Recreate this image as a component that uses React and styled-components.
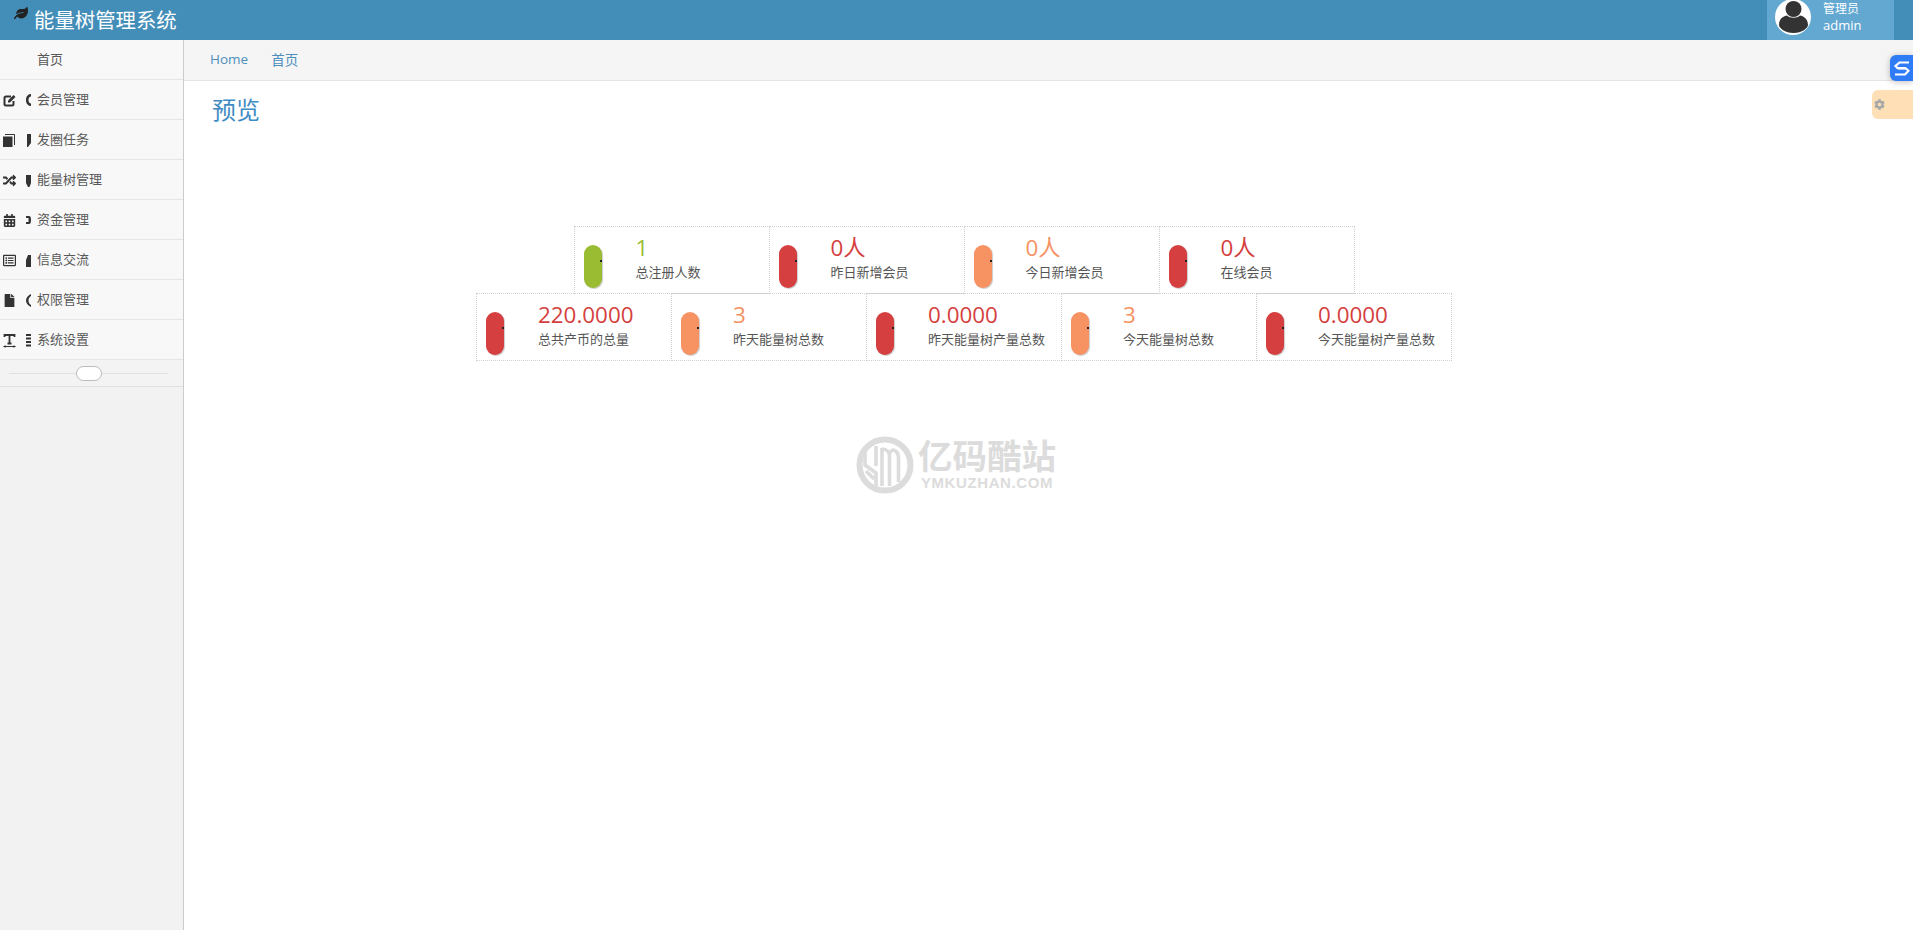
import React from 'react';
import styled, { createGlobalStyle } from 'styled-components';
import { FaLeaf, FaRandom, FaCalendarAlt, FaFile, FaCog, FaRegListAlt } from 'react-icons/fa';

const GlobalStyle = createGlobalStyle`
  html, body {
    margin: 0;
    padding: 0;
    height: 100%;
    overflow: hidden;
    background: #fff;
    font-family: "Open Sans", "Noto Sans CJK SC", sans-serif;
    font-size: 13px;
    color: #393939;
  }
`;

const tones = {
  green: '#9abc32',
  red: '#d53f40',
  orange: '#f79263',
};

// the template's own edit, book and text glyphs are heavier than the icon pack ones
const EditGlyph = () => (
  <svg width="13" height="13" viewBox="0 0 13 13">
    <path d="M8 2.500H3A1.500 1.500 0 0 0 1.500 4v6A1.500 1.500 0 0 0 3 11.500h6A1.500 1.500 0 0 0 10.500 10V7" fill="none" stroke="#333" strokeWidth="2" />
    <path d="M5 6.500L10.500 1 12.500 3 7 8.500H5z" fill="#333" />
  </svg>
);

const BookGlyph = () => (
  <svg width="12" height="13" viewBox="0 0 12 13">
    <path d="M0 2.500h9.500V13H0z" fill="#333" />
    <path d="M2 .5h9.500V11" fill="none" stroke="#333" strokeWidth="1" />
  </svg>
);

const TextGlyph = () => (
  <svg width="13" height="14" viewBox="0 0 13 14">
    <path d="M1.500 3V1h10v2M6.500 1v8M4.500 9.500h4" fill="none" stroke="#333" strokeWidth="1.800" />
    <path d="M.5 12.500h12" fill="none" stroke="#333" strokeWidth="1" />
    <path d="M.5 12.500l2-1.500v3zM12.500 12.500l-2-1.500v3z" fill="#333" />
  </svg>
);

const menuData = [
  { label: '首页' },
  { label: '会员管理', icon: <EditGlyph />, stub: 'M5 0C2 0 0 2.500 0 6s2 6 5 6V9.500C3.500 9.500 2.500 8 2.500 6S3.500 2.500 5 2.500z' },
  { label: '发圈任务', icon: <BookGlyph />, stub: 'M1 0h4v9L2 13H1z' },
  { label: '能量树管理', icon: <FaRandom />, stub: 'M0 1h5v8l-1.500 4H2L0 9z' },
  { label: '资金管理', icon: <FaCalendarAlt />, stub: 'M0 2h3c1.500 0 2 1.500 2 4s-.5 4-2 4H0V8h2.500V4H0z' },
  { label: '信息交流', icon: <FaRegListAlt />, stub: 'M2 1h3v3H5v9H0V6z' },
  { label: '权限管理', icon: <FaFile />, stub: 'M5 0C2 1.500 0 3.500 0 6.500s2 5 5 6.500v-2C3.500 10 2.500 8.500 2.500 6.500S3.500 3 5 2z' },
  { label: '系统设置', icon: <TextGlyph />, stub: 'M0 0h5v2H0zM0 3.500h5v2H0zM0 7h5v2H0zM0 10.500h5v2H0z' },
];

const topStats = [
  { value: '1', label: '总注册人数', tone: 'green' },
  { value: '0人', label: '昨日新增会员', tone: 'red' },
  { value: '0人', label: '今日新增会员', tone: 'orange' },
  { value: '0人', label: '在线会员', tone: 'red' },
];

const bottomStats = [
  { value: '220.0000', label: '总共产币的总量', tone: 'red' },
  { value: '3', label: '昨天能量树总数', tone: 'orange' },
  { value: '0.0000', label: '昨天能量树产量总数', tone: 'red' },
  { value: '3', label: '今天能量树总数', tone: 'orange' },
  { value: '0.0000', label: '今天能量树产量总数', tone: 'red' },
];

const StatCard = ({ value, label, tone }) => (
  <Card>
    <Pill $tone={tone} />
    <CardText>
      <CardValue $tone={tone}>{value}</CardValue>
      <CardLabel>{label}</CardLabel>
    </CardText>
  </Card>
);

const MenuRow = ({ label, icon, stub }) => (
  <MenuItem>
    <MenuIcon>{icon}</MenuIcon>
    <MenuStub>
      {stub && (
        <svg width="5" height="13" viewBox="0 0 5 13">
          <path d={stub} fill="#333" />
        </svg>
      )}
    </MenuStub>
    <MenuLabel>{label}</MenuLabel>
  </MenuItem>
);

const App = () => {
  return (
    <Page>
      <GlobalStyle />
      <Navbar>
        <Brand>
          <BrandIcon><FaLeaf /></BrandIcon>
          <span>能量树管理系统</span>
        </Brand>
        <UserBox>
          <Avatar>
            <svg width="36" height="36" viewBox="0 0 36 36">
              <circle cx="18" cy="18" r="18" fill="#fff" />
              <circle cx="18.500" cy="10" r="8" fill="#333" />
              <path d="M4 26c0-7 5-9 8-9.500 3 3 10 3 13 0 3 .5 8 3 8 9.500 0 3-6 8-14.500 8S4 29 4 26z" fill="#333" />
            </svg>
          </Avatar>
          <UserText>
            <UserRole>管理员</UserRole>
            <UserName>admin</UserName>
          </UserText>
        </UserBox>
      </Navbar>
      <Body>
        <Sidebar>
          {menuData.map((item, i) => (
            <MenuRow key={i} label={item.label} icon={item.icon} stub={item.stub} />
          ))}
          <Toggler>
            <TogglerKnob />
          </Toggler>
        </Sidebar>
        <Main>
          <Breadcrumb>
            <Crumb>Home</Crumb>
            <Crumb>首页</Crumb>
          </Breadcrumb>
          <Content>
            <Title>预览</Title>
            <Stats>
              <StatRow>
                {topStats.map((s, i) => <StatCard key={i} {...s} />)}
              </StatRow>
              <StatRow>
                {bottomStats.map((s, i) => <StatCard key={i} {...s} />)}
              </StatRow>
            </Stats>
          </Content>
        </Main>
      </Body>

      <Watermark>
        <svg width="58" height="58" viewBox="0 0 58 58">
          <circle cx="29" cy="29" r="25.500" fill="none" stroke="#dcdcdc" strokeWidth="6" />
          <path d="M9 16v13l11 8v13M20 10v20M10 35l8 8M26 50V12M26 13c5 0 7.500 3 7.500 7v30M33.500 20c0-4 2-6 4-6 3 1 5 4 5 8v24" fill="none" stroke="#dcdcdc" strokeWidth="3.600" />
        </svg>
        <WatermarkText>
          <WatermarkName>亿码酷站</WatermarkName>
          <WatermarkSite>YMKUZHAN.COM</WatermarkSite>
        </WatermarkText>
      </Watermark>

      <FloatBadge>
        <svg width="16" height="15" viewBox="0 0 16 15">
          <path d="M15 1.500H5.500L1.500 5l2 2.200H12" fill="none" stroke="#fff" strokeWidth="2.200" />
          <path d="M4 7.500h8l2.500 2.300-3.500 3.700H1" fill="none" stroke="#fff" strokeWidth="2.200" />
        </svg>
      </FloatBadge>
      <SettingsTab>
        <FaCog />
      </SettingsTab>
    </Page>
  );
};

//style

const Page = styled.div`
  height: 930px;
  display: flex;
  flex-direction: column;
  overflow: hidden;
`;

const Navbar = styled.div`
  height: 40px;
  flex: none;
  background: #438eb9;
  display: flex;
  justify-content: space-between;
  padding-right: 19px;
  overflow: hidden;
`;

const Brand = styled.div`
  display: flex;
  align-items: center;
  color: #fff;
  font-size: 20.4px;
  padding-left: 14px;
  height: 38px;
`;

const BrandIcon = styled.span`
  display: flex;
  color: #222;
  font-size: 14px;
  margin-right: 6px;
  margin-top: -13px;
`;

const UserBox = styled.div`
  width: 127px;
  background: #62a8d1;
  display: flex;
  padding-left: 8px;
  box-sizing: border-box;
  color: #fff;
`;

const Avatar = styled.div`
  margin-top: -1px;
  height: 36px;
  display: flex;
`;

const UserText = styled.div`
  margin-left: 12px;
  display: flex;
  flex-direction: column;
  line-height: 16px;
  padding-top: 1px;
`;

const UserRole = styled.span`
  font-size: 12px;
`;

const UserName = styled.span`
  font-size: 13px;
`;

const Body = styled.div`
  flex: 1;
  display: flex;
  min-height: 0;
`;

const Sidebar = styled.div`
  width: 184px;
  flex: none;
  box-sizing: border-box;
  background: #f2f2f2;
  border-right: 1px solid #ccc;
`;

const MenuItem = styled.div`
  height: 40px;
  box-sizing: border-box;
  background: #f8f8f8;
  border-bottom: 1px solid #e5e5e5;
  display: flex;
  align-items: center;
  color: #585858;
  font-size: 13px;
`;

const MenuIcon = styled.span`
  width: 26px;
  flex: none;
  display: flex;
  justify-content: center;
  padding-right: 8px;
  margin-top: 2px;
  box-sizing: border-box;
  font-size: 13px;
  color: #333;
`;

const MenuStub = styled.span`
  width: 11px;
  flex: none;
  display: flex;
  margin-top: 2px;
`;

const MenuLabel = styled.span`
  margin-top: -2px;
`;

const Toggler = styled.div`
  height: 27px;
  box-sizing: border-box;
  border-bottom: 1px solid #e0e0e0;
  background: #f3f3f3;
  display: flex;
  align-items: center;
  justify-content: center;
  position: relative;
  &::before {
    content: "";
    position: absolute;
    left: 9px;
    right: 15px;
    top: 13px;
    border-top: 1px solid #e0e0e0;
  }
`;

const TogglerKnob = styled.div`
  width: 26px;
  height: 15px;
  box-sizing: border-box;
  margin-right: 6px;
  background: #fff;
  border: 1px solid #bbb;
  border-radius: 8px;
  position: relative;
`;

const Main = styled.div`
  flex: 1;
  min-width: 0;
`;

const Breadcrumb = styled.div`
  height: 41px;
  box-sizing: border-box;
  background: #f5f5f5;
  border-bottom: 1px solid #e5e5e5;
  display: flex;
  align-items: center;
  gap: 23px;
  padding: 0 0 3px 26px;
`;

const Crumb = styled.span`
  color: #4c8fbd;
  font-size: 13.500px;
`;

const Content = styled.div`
  padding-top: 12px;
`;

const Title = styled.div`
  font-size: 24px;
  line-height: 34px;
  color: #3f8cc4;
  padding-left: 28px;
`;

const Stats = styled.div`
  width: 1560px;
  margin-top: 99px;
  display: flex;
  flex-direction: column;
  align-items: center;
`;

const StatRow = styled.div`
  display: flex;
  height: 67px;
`;

const Card = styled.div`
  width: 196px;
  height: 68px;
  margin-right: -1px;
  box-sizing: border-box;
  border: 1px dotted #d0d0d0;
  padding: 18px 0 0 9px;
  display: flex;
  align-items: flex-start;
  &:last-child {
    margin-right: 0;
  }
`;

const Pill = styled.div`
  width: 18px;
  height: 43px;
  flex: none;
  border-radius: 9px;
  background: ${(p) => tones[p.$tone]};
  box-shadow: 1px 1px 1px rgba(0, 0, 0, 0.2);
  position: relative;
  &::after {
    content: "";
    position: absolute;
    right: 0;
    top: 15px;
    width: 2px;
    height: 2px;
    background: #222;
  }
`;

const CardText = styled.div`
  margin-left: 34px;
  margin-top: -12px;
  display: flex;
  flex-direction: column;
`;

const CardValue = styled.div`
  font-size: 22.400px;
  line-height: 29px;
  color: ${(p) => tones[p.$tone]};
`;

const CardLabel = styled.div`
  font-size: 13px;
  line-height: 21px;
  color: #555;
  white-space: nowrap;
`;

const Watermark = styled.div`
  position: absolute;
  left: 856px;
  top: 436px;
  display: flex;
  align-items: center;
  gap: 4px;
`;

const WatermarkText = styled.div`
  display: flex;
  flex-direction: column;
  align-items: center;
  margin-top: -1px;
`;

const WatermarkName = styled.div`
  font-size: 34.500px;
  font-weight: 700;
  line-height: 36px;
  color: #dcdcdc;
`;

const WatermarkSite = styled.div`
  font-family: "Liberation Sans", sans-serif;
  font-size: 15px;
  font-weight: 700;
  line-height: 17px;
  letter-spacing: 0.600px;
  color: #dcdcdc;
  white-space: nowrap;
`;

const FloatBadge = styled.div`
  position: absolute;
  right: 0;
  top: 55px;
  width: 23px;
  height: 26px;
  background: #2f7cf6;
  border-radius: 6px 0 0 6px;
  box-shadow: 0 1px 6px rgba(0, 0, 0, 0.25);
  display: flex;
  align-items: center;
  padding-left: 4px;
  box-sizing: border-box;
  overflow: hidden;
`;

const SettingsTab = styled.div`
  position: absolute;
  right: 0;
  top: 90px;
  width: 41px;
  height: 29px;
  background: #ffdfb5;
  border-radius: 6px 0 0 6px;
  display: flex;
  align-items: center;
  padding-left: 2px;
  box-sizing: border-box;
  color: #a8a8a8;
  font-size: 11px;
`;

export default App;
